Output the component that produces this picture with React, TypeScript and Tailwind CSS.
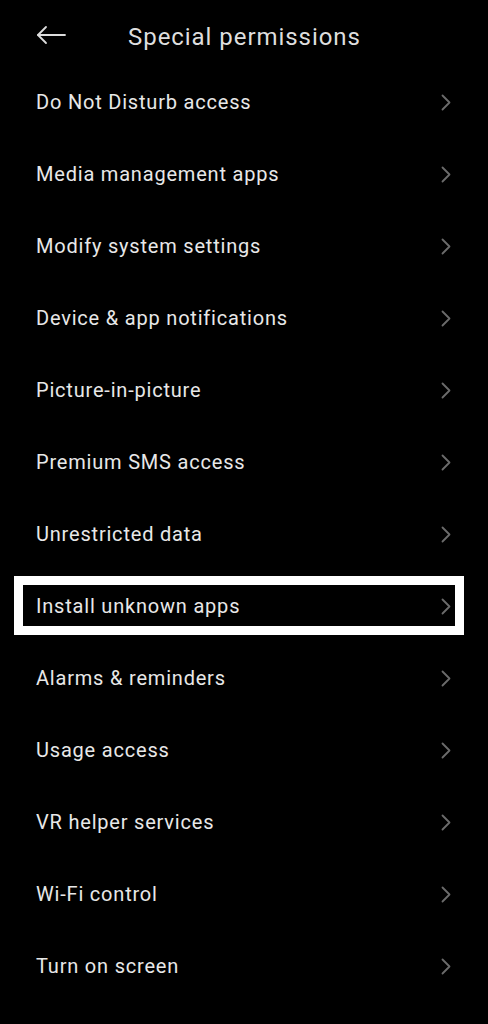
const ITEMS = [
  'Do Not Disturb access',
  'Media management apps',
  'Modify system settings',
  'Device & app notifications',
  'Picture-in-picture',
  'Premium SMS access',
  'Unrestricted data',
  'Install unknown apps',
  'Alarms & reminders',
  'Usage access',
  'VR helper services',
  'Wi-Fi control',
  'Turn on screen',
]

// The highlighted row in the screenshot.
const HIGHLIGHT = 'Install unknown apps'

export default function App() {
  return (
    <div
      className="min-h-[1024px] w-full bg-black text-[#e6e6e6]"
      style={{ fontFamily: 'Roboto, "Noto Sans", sans-serif' }}
    >
      <header className="flex h-[66px] items-center pt-[8px]">
        <button type="button" aria-label="Back" className="ml-[36px] -mt-[4px] flex h-[30px] w-[30px] items-center">
          <svg width="30" height="20" viewBox="0 0 30 20" fill="none" stroke="#dcdcdc" strokeWidth="1.8" strokeLinecap="round" strokeLinejoin="round">
            <path d="M29 10H2" />
            <path d="M10 2L2 10L10 18" />
          </svg>
        </button>
        <h1 className="ml-[62px] text-[24px] font-normal tracking-[0.95px] text-[#dedede]">Special permissions</h1>
      </header>
      <ul>
        {ITEMS.map((label) => (
          <li key={label} className="relative flex h-[72px] items-center justify-between pl-[36px] pr-[37px]">
            <span className="text-[20px] leading-none tracking-[0.8px] text-[#e8e8e8]">{label}</span>
            <svg width="10" height="17" viewBox="0 0 10 17" fill="none" stroke="#6b6b6b" strokeWidth="1.8" strokeLinecap="round" strokeLinejoin="round">
              <path d="M1.5 1.5L8.5 8.5L1.5 15.5" />
            </svg>
            {label === HIGHLIGHT && (
              <div className="pointer-events-none absolute top-[6px] right-[24px] bottom-[7px] left-[14px] border-[9px] border-white" />
            )}
          </li>
        ))}
      </ul>
    </div>
  )
}
